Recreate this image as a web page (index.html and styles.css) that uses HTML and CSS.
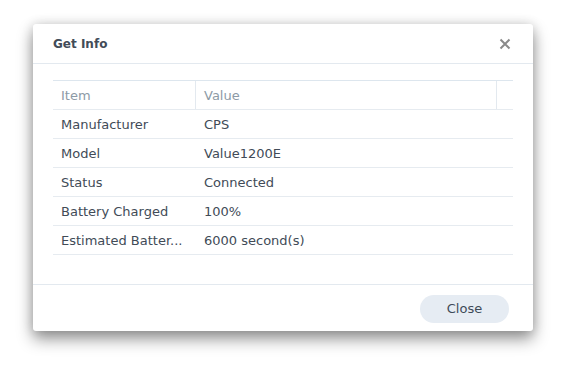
FILE: index.html
```html
<!DOCTYPE html>
<html>
<head>
<meta charset="utf-8">
<link rel="stylesheet" href="styles.css">
</head>
<body>
<div class="dialog">
  <div class="header">
    <span class="title">Get Info</span>
    <span class="close-x"><svg width="12" height="12" viewBox="0 0 12 12"><path d="M1.5 1.5 L10.5 10.5 M10.5 1.5 L1.5 10.5" stroke="#8a8a8a" stroke-width="2" fill="none"/></svg></span>
  </div>
  <div class="body">
    <div class="grid">
      <div class="row head">
        <div class="c1">Item</div>
        <div class="c2">Value</div>
        <div class="c3"></div>
      </div>
      <div class="row"><div class="c1">Manufacturer</div><div class="c2">CPS</div></div>
      <div class="row"><div class="c1">Model</div><div class="c2">Value1200E</div></div>
      <div class="row"><div class="c1">Status</div><div class="c2">Connected</div></div>
      <div class="row"><div class="c1">Battery Charged</div><div class="c2">100%</div></div>
      <div class="row"><div class="c1">Estimated Batter...</div><div class="c2">6000 second(s)</div></div>
    </div>
  </div>
  <div class="footer">
    <button class="btn">Close</button>
  </div>
</div>
</body>
</html>
```
FILE: styles.css
```css
html, body { margin: 0; padding: 0; background: #fff; }
body { padding: 24px 0 0 33px; min-height: 365px; box-sizing: border-box; font-family: "DejaVu Sans", Verdana, sans-serif; }
.dialog {
  width: 500px; height: 307px; background: #fff; border-radius: 3px;
  box-shadow: 0 8px 16px rgba(0,0,0,0.42), 0 0 12px rgba(0,0,0,0.14);
  display: flex; flex-direction: column;
}
.header {
  height: 39px; border-bottom: 1px solid #e3e9ef;
  display: flex; align-items: center; justify-content: space-between;
  padding: 0 22px 0 20px;
}
.title { font-weight: bold; font-size: 12px; color: #424c58; }
.close-x { display: flex; width: 12px; height: 12px; }
.body { flex: 1; padding: 16px 20px 0 20px; }
.grid { border-top: 1px solid #dde6ee; }
.row { display: flex; height: 28px; border-bottom: 1px solid #e6ebf0; align-items: center; font-size: 13px; color: #414b57; }
.c1 { width: 143px; padding-left: 8px; box-sizing: border-box; height: 100%; display: flex; align-items: center; }
.c2 { flex: 1; padding-left: 8px; height: 100%; display: flex; align-items: center; }
.c3 { width: 16px; height: 100%; border-left: 1px solid #e3e9ef; }
.head { color: #8d9aa6; }
.head .c1 { border-right: 1px solid #e3e9ef; }
.head .c2 { padding-left: 8px; }
.footer {
  height: 46px; border-top: 1px solid #e3e9ef;
  display: flex; align-items: center; justify-content: flex-end; padding-right: 24px;
}
.btn {
  width: 89px; height: 28px; border: none; border-radius: 14px; background: #e6ecf3;
  color: #3e4a58; font-family: "DejaVu Sans", Verdana, sans-serif; font-size: 13px; margin-top: 1px;
}
```
